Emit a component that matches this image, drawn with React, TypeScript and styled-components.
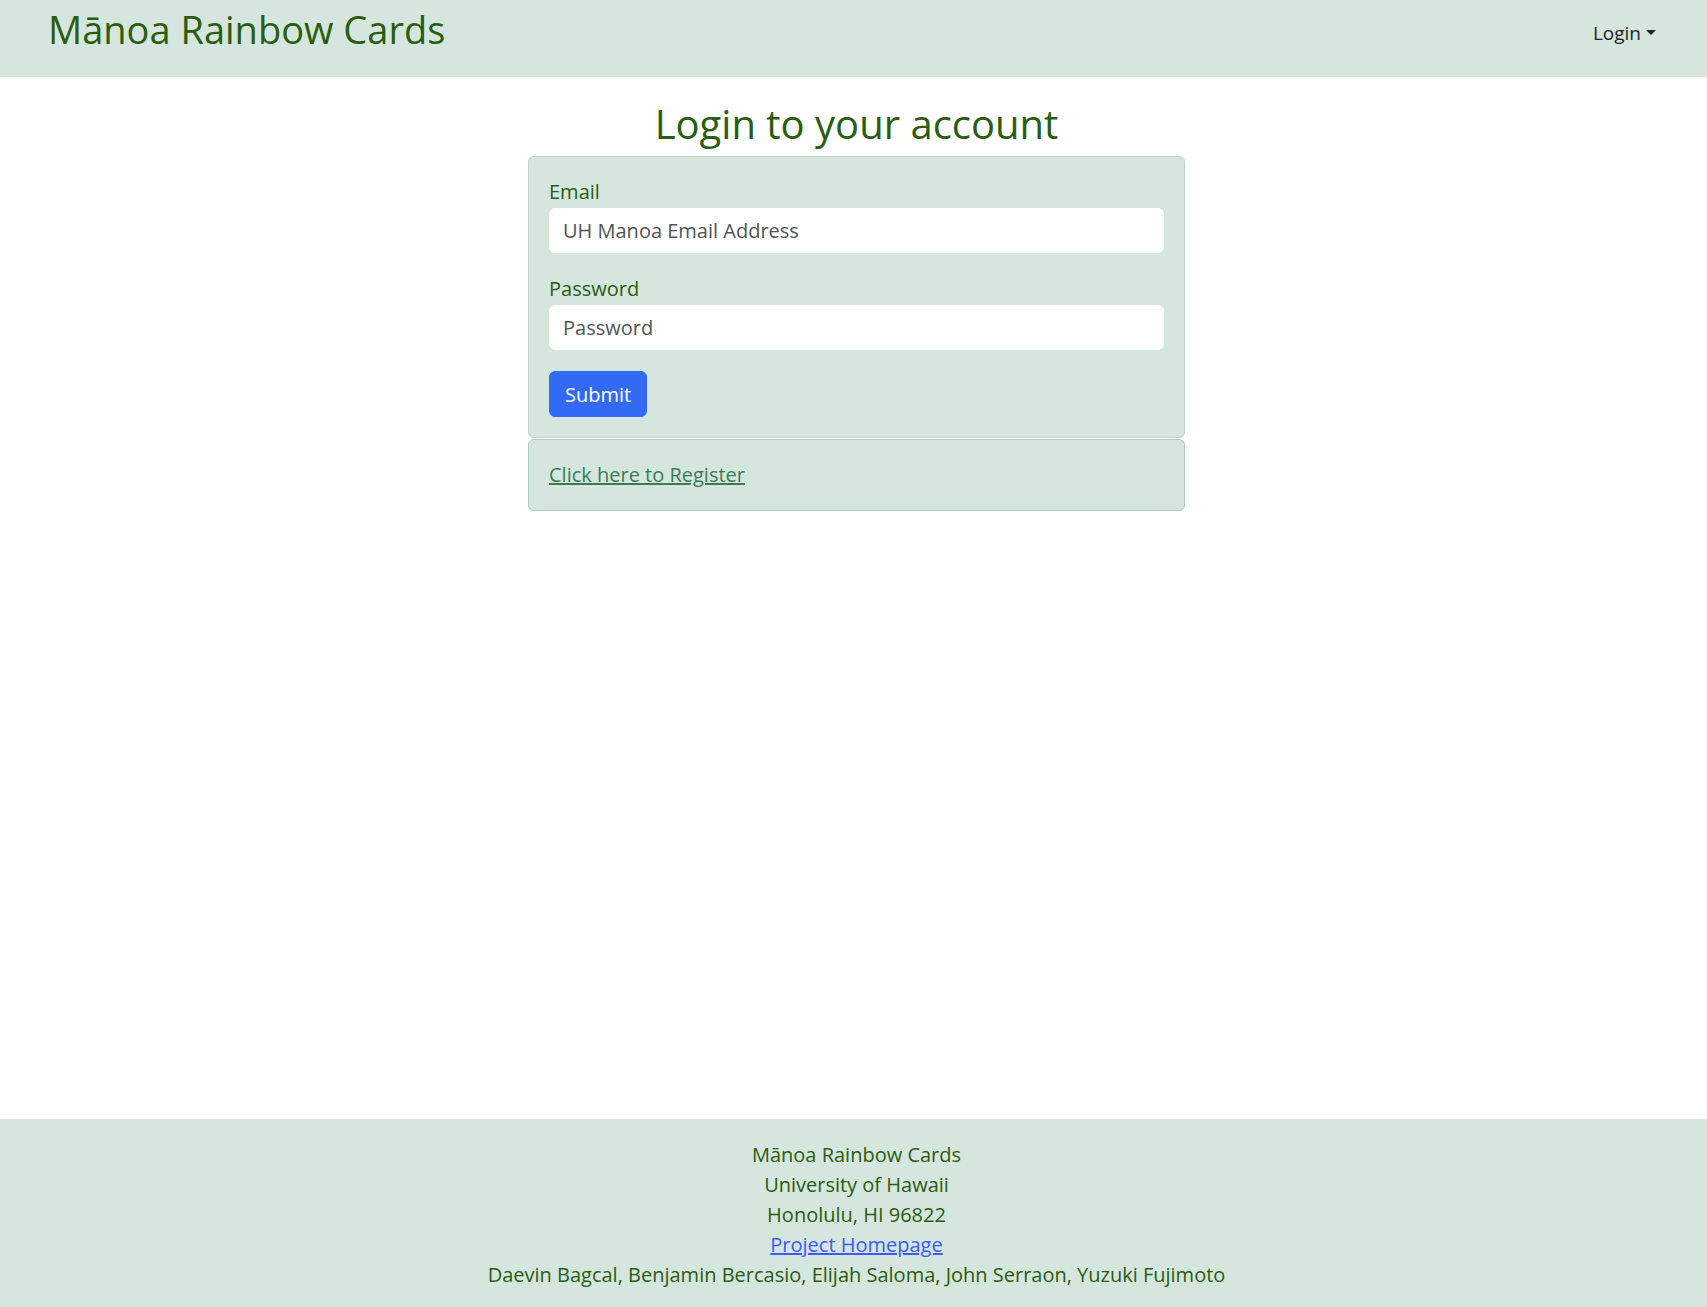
import React from "react";
import styled, { createGlobalStyle } from "styled-components";

const GlobalStyle = createGlobalStyle`
  html, body {
    margin: 0;
    padding: 0;
  }
  body {
    font-family: "Comic Sans MS", "Open Sans", "Noto Sans", sans-serif;
    font-size: 20px;
    line-height: 1.5;
    color: #2a5d10;
    background: #ffffff;
  }
  * { box-sizing: border-box; }
`;

const Page = styled.div`
  min-height: 100vh;
  display: flex;
  flex-direction: column;
`;

const NavBar = styled.nav`
  height: 77px;
  background: #d5e6de;
  display: flex;
  justify-content: space-between;
  align-items: flex-start;
  padding: 7px 51px 0 48px;
`;

const Brand = styled.a`
  font-size: 38px;
  line-height: 1.2;
  color: #2a5d10;
  text-decoration: none;
`;

const NavToggle = styled.button`
  margin-top: 11px;
  border: none;
  background: transparent;
  padding: 0;
  display: flex;
  align-items: center;
  gap: 5px;
  font-family: "Open Sans", "Noto Sans", sans-serif;
  font-size: 19px;
  line-height: 30px;
  color: #222;
  cursor: pointer;
`;

const Caret = styled.span`
  width: 0;
  height: 0;
  border-left: 5px solid transparent;
  border-right: 5px solid transparent;
  border-top: 5px solid #222;
  margin-top: -2px;
`;

const Main = styled.main`
  flex: 1;
  display: flex;
  flex-direction: column;
  align-items: center;
  padding: 23px 0 0 6px;
`;

const Heading = styled.h2`
  margin: 0 0 8px;
  font-size: 40px;
  line-height: 48px;
  font-weight: normal;
  color: #2a5d10;
`;

const Card = styled.div<{ $accent?: boolean }>`
  width: 657px;
  background: #d5e6de;
  border: 1px solid ${(p) => (p.$accent ? "#aacdbb" : "#c4d2cb")};
  border-radius: 6px;
  padding: 20px;
  margin-bottom: 1px;
`;

const Form = styled.form`
  display: flex;
  flex-direction: column;
`;

const Field = styled.div`
  display: flex;
  flex-direction: column;
  margin-bottom: 21px;
`;

const Label = styled.label`
  line-height: 30px;
  margin-bottom: 1px;
  color: #2a5d10;
`;

const Input = styled.input`
  height: 45px;
  border: 1px solid #ffffff;
  border-radius: 6px;
  background: #ffffff;
  padding: 0 13px;
  font-family: inherit;
  font-size: 20px;
  color: #444;
  &::placeholder {
    color: #4f5457;
  }
`;

const SubmitButton = styled.button`
  align-self: flex-start;
  height: 46px;
  padding: 0 15px;
  border: 1px solid #336af5;
  border-radius: 6px;
  background: #336af5;
  color: #ffffff;
  font-family: inherit;
  font-size: 20px;
  cursor: pointer;
`;

const RegisterLink = styled.a`
  display: block;
  line-height: 30px;
  color: #3c7b52;
  text-decoration: underline;
`;

const Footer = styled.footer`
  background: #d5e6de;
  padding: 21px 0 17px 6px;
  display: flex;
  flex-direction: column;
  align-items: center;
  line-height: 30px;
  color: #2a5d10;
`;

const FooterLink = styled.a`
  color: #3a5cff;
  text-decoration: underline;
`;

export default function App() {
  return (
    <>
      <GlobalStyle />
      <Page>
        <NavBar>
          <Brand href="#">Mānoa Rainbow Cards</Brand>
          <NavToggle type="button">
            Login
            <Caret />
          </NavToggle>
        </NavBar>
        <Main>
          <Heading>Login to your account</Heading>
          <Card>
            <Form onSubmit={(e) => e.preventDefault()}>
              <Field>
                <Label htmlFor="email">Email</Label>
                <Input id="email" type="email" placeholder="UH Manoa Email Address" />
              </Field>
              <Field>
                <Label htmlFor="password">Password</Label>
                <Input id="password" type="password" placeholder="Password" />
              </Field>
              <SubmitButton type="submit">Submit</SubmitButton>
            </Form>
          </Card>
          <Card $accent>
            <RegisterLink href="#">Click here to Register</RegisterLink>
          </Card>
        </Main>
        <Footer>
          <span>Mānoa Rainbow Cards</span>
          <span>University of Hawaii</span>
          <span>Honolulu, HI 96822</span>
          <FooterLink href="#">Project Homepage</FooterLink>
          <span>Daevin Bagcal, Benjamin Bercasio, Elijah Saloma, John Serraon, Yuzuki Fujimoto</span>
        </Footer>
      </Page>
    </>
  );
}
